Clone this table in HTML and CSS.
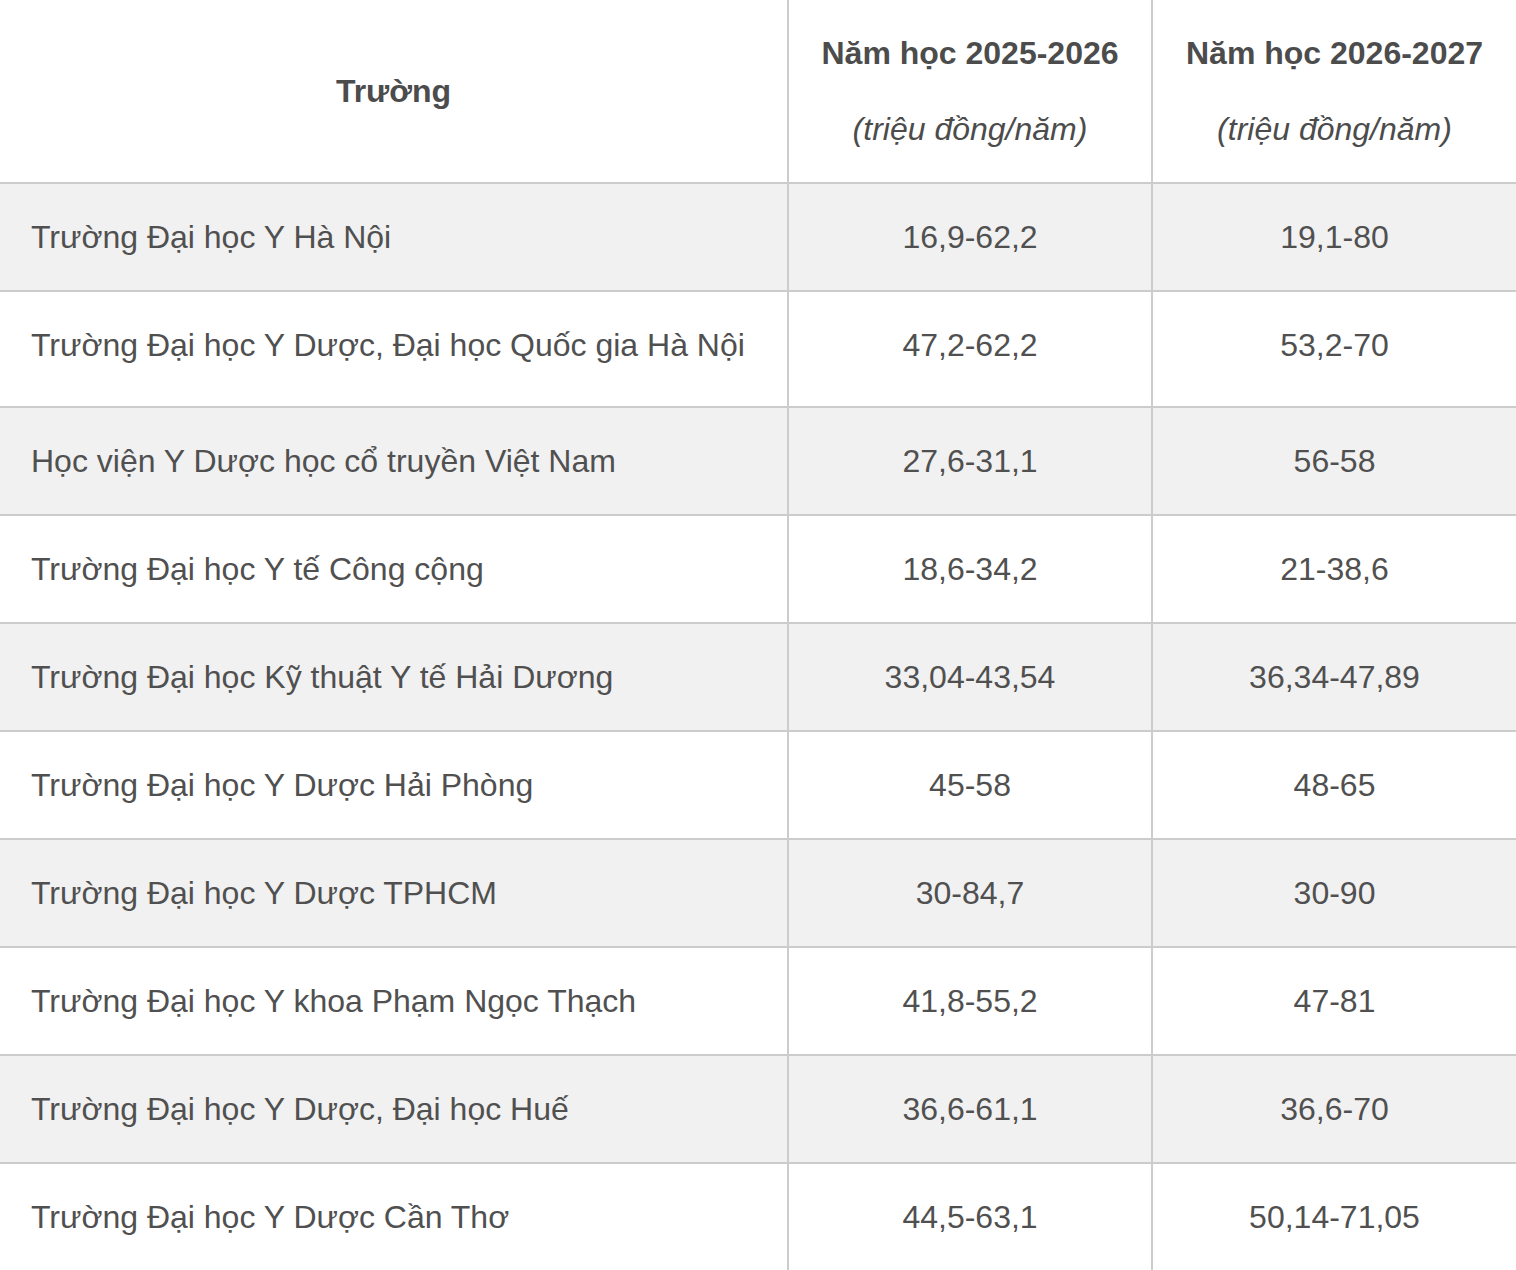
FILE: index.html
```html
<!DOCTYPE html>
<html lang="vi">
<head>
<meta charset="utf-8">
<title>Học phí</title>
<link rel="stylesheet" href="styles.css">
</head>
<body>
<table class="fees">
  <colgroup>
    <col class="c-school">
    <col class="c-year">
    <col class="c-year2">
  </colgroup>
  <thead>
    <tr>
      <th class="h-school">Trường</th>
      <th class="h-year"><div class="h-line">Năm học 2025-2026</div><div class="h-line h-unit">(triệu đồng/năm)</div></th>
      <th class="h-year"><div class="h-line">Năm học 2026-2027</div><div class="h-line h-unit">(triệu đồng/năm)</div></th>
    </tr>
  </thead>
  <tbody>
    <tr class="alt"><td>Trường Đại học Y Hà Nội</td><td>16,9-62,2</td><td>19,1-80</td></tr>
    <tr class="tall"><td>Trường Đại học Y Dược, Đại học Quốc gia Hà Nội</td><td>47,2-62,2</td><td>53,2-70</td></tr>
    <tr class="alt"><td>Học viện Y Dược học cổ truyền Việt Nam</td><td>27,6-31,1</td><td>56-58</td></tr>
    <tr><td>Trường Đại học Y tế Công cộng</td><td>18,6-34,2</td><td>21-38,6</td></tr>
    <tr class="alt"><td>Trường Đại học Kỹ thuật Y tế Hải Dương</td><td>33,04-43,54</td><td>36,34-47,89</td></tr>
    <tr><td>Trường Đại học Y Dược Hải Phòng</td><td>45-58</td><td>48-65</td></tr>
    <tr class="alt"><td>Trường Đại học Y Dược TPHCM</td><td>30-84,7</td><td>30-90</td></tr>
    <tr><td>Trường Đại học Y khoa Phạm Ngọc Thạch</td><td>41,8-55,2</td><td>47-81</td></tr>
    <tr class="alt"><td>Trường Đại học Y Dược, Đại học Huế</td><td>36,6-61,1</td><td>36,6-70</td></tr>
    <tr><td>Trường Đại học Y Dược Cần Thơ</td><td>44,5-63,1</td><td>50,14-71,05</td></tr>
  </tbody>
</table>
</body>
</html>
```
FILE: styles.css
```css
html, body {
  margin: 0;
  padding: 0;
  background: #ffffff;
}

body {
  font-family: "Liberation Sans", Arial, Helvetica, sans-serif;
  color: #505050;
  font-size: 32px;
}

.fees {
  width: 1516px;
  table-layout: fixed;
  border-collapse: separate;
  border-spacing: 0;
}

.c-school { width: 787px; }
.c-year { width: 364px; }
.c-year2 { width: 365px; }

.fees th,
.fees td {
  border-bottom: 2px solid #cccccc;
  line-height: 48px;
  vertical-align: middle;
  padding: 0;
}

.fees th + th,
.fees td + td {
  border-left: 2px solid #cccccc;
}

.fees th {
  height: 182px;
  font-weight: bold;
  text-align: center;
  color: #4c4c4c;
}

.h-line + .h-line {
  margin-top: 28px;
}

.h-unit {
  font-weight: normal;
  font-style: italic;
}

.fees td {
  height: 106px;
  text-align: center;
  white-space: nowrap;
}

.fees td:first-child {
  text-align: left;
  padding-left: 31px;
}

.fees tr.tall td {
  padding-bottom: 8px;
}

.fees tr.alt td {
  background: #f1f1f1;
}
```
